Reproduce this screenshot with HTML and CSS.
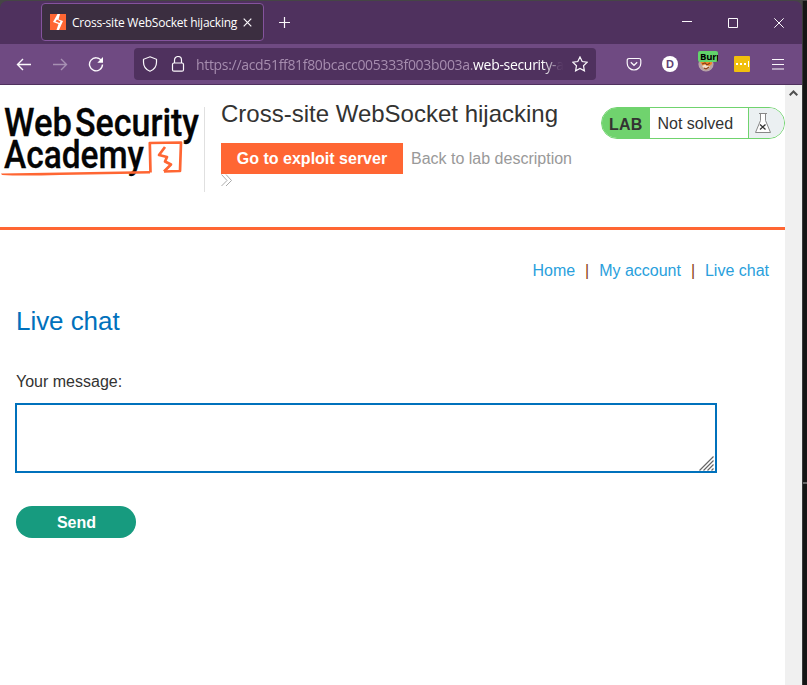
FILE: index.html
```html
<!DOCTYPE html>
<html lang="en">
<head>
<meta charset="utf-8">
<title>Cross-site WebSocket hijacking</title>
<link rel="stylesheet" href="styles.css">
</head>
<body>
<div class="desktop">
<div class="window">
  <header class="titlebar">
    <div class="tab">
      <svg class="favicon" width="16" height="16" viewBox="0 0 16 16"><path fill="#ff6633" d="M0 0h16v16H0z"/><path fill="#fff" d="M7.500 0H10L8.500 5.500 13 7 9 16H6.500L8.500 10 3 8z"/><path fill="#ff6633" d="M7 5.500L5.500 7.500 9.500 9 10.500 7.500z"/></svg>
      <span class="tab-title">Cross-site WebSocket hijacking</span>
      <svg class="tab-close" width="9" height="9" viewBox="0 0 9 9"><path d="M.7.7l7.6 7.6M8.3.7L.7 8.3"/></svg>
    </div>
    <svg class="new-tab" width="12" height="12" viewBox="0 0 12 12"><path d="M5.500 0v11M0 5.500h11"/></svg>
    <div class="controls">
      <svg width="10" height="12" viewBox="0 0 10 12"><path d="M0 4.500h10"/></svg>
      <svg width="10" height="12" viewBox="0 0 10 12"><path d="M.5 1.500h9v9h-9z"/></svg>
      <svg width="10" height="12" viewBox="0 0 10 12"><path d="M.3 1.300l9.400 9.400M9.700 1.300L.3 10.700"/></svg>
    </div>
  </header>
  <nav class="toolbar">
    <div class="history">
      <svg width="16" height="16" viewBox="0 0 16 16"><path d="M15 8.500H1.500M7 3L1.500 8.500 7 14"/></svg>
      <svg class="dim" width="16" height="16" viewBox="0 0 16 16"><path d="M1 8.500h13.500M9 3l5.500 5.500L9 14"/></svg>
      <svg width="16" height="16" viewBox="0 0 16 16"><path d="M13.600 5A6.500 6.500 0 1 0 14.500 8.500"/><path fill="#fff" stroke="none" d="M15 1v5.700H9.300z"/></svg>
    </div>
    <div class="address">
      <svg width="16" height="16" viewBox="0 0 16 16"><path d="M8 .8l6.500 2.500v3c0 4-2.500 7.500-6.500 9-4-1.500-6.500-5-6.500-9v-3z"/></svg>
      <svg width="14" height="16" viewBox="0 0 14 16"><rect x="1.500" y="7" width="11" height="8.200" rx="1.500"/><path d="M3.500 7V4a3.500 3.500 0 0 1 7 0v3"/></svg>
      <div class="url">https://acd51ff81f80bcacc005333f003b003a.<b>web-security-</b>academy.net</div>
      <svg class="star" width="16" height="16" viewBox="0 0 16 16"><path d="M8 .9l2.200 4.600 5 .7-3.700 3.500.9 5.100L8 12.400l-4.400 2.400.9-5.100L.8 6.200l5-.7z"/></svg>
    </div>
    <div class="extensions">
      <svg width="16" height="16" viewBox="0 0 16 16"><path d="M3 2.500h10a1.800 1.800 0 0 1 1.800 1.800v2.900a6.800 6.800 0 0 1-13.600 0V4.300A1.800 1.800 0 0 1 3 2.500z"/><path d="M4.800 6.200L8 9.300l3.200-3.100"/></svg>
      <span class="disc">D</span>
      <div class="proxy">
        <svg width="16" height="16" viewBox="0 0 16 16"><circle cx="8" cy="8" r="7" fill="#bca49c" stroke="#b9a5ab"/><path fill="#f18a2b" stroke="none" d="M1 4l5-2 8 1v5l-4 3-5-1z"/><path fill="#f4e1c8" stroke="none" d="M4 10l4-2 4 3-4 3z"/><path stroke="#8a3f18" d="M4 8l3-1 2 2 3-2M6 12l2 1 3-2"/></svg>
        <span class="badge">Burp</span>
      </div>
      <svg width="16" height="16" viewBox="0 0 16 16"><rect width="16" height="16" rx="1" fill="#f1bf0d" stroke="none"/><path fill="#fff" stroke="none" d="M2 7h2v2H2zM6 7h2v2H6zM10 7h2v2h-2zM14 5h1v6h-1z"/></svg>
      <svg width="12" height="16" viewBox="0 0 12 16"><path d="M0 3.500h12M0 8.500h12M0 13h12"/></svg>
    </div>
  </nav>
  <div class="viewport">
    <main class="page">
      <header class="lab-header">
        <svg class="logo" width="205" height="96" viewBox="0 0 205 96">
          <g class="logo-text"><text x="4" y="51" textLength="68" lengthAdjust="spacingAndGlyphs">Web</text><text x="75" y="51" textLength="124" lengthAdjust="spacingAndGlyphs">Security</text><text x="4" y="83" textLength="140" lengthAdjust="spacingAndGlyphs">Academy</text></g>
          <path fill="#ff6633" d="M1 88.500l149-2.500v2.500L60 90q-40 1-58 0z"/>
          <path class="logo-box" d="M150.500 87.500l-.7-29.500 31.200-.5-1 28.500-16 .5"/><path class="logo-box" d="M165 62l-6 8 8 2-2 4.500 6 3-7 7"/>
        </svg>
        <div class="lab-info">
          <h1>Cross-site WebSocket hijacking</h1>
          <div class="links"><a class="exploit">Go to exploit server</a><a class="back">Back to lab description</a></div>
          <svg class="chevrons" width="12" height="13" viewBox="0 0 12 13"><path d="M.5.5L6 6.500.5 12M5 .5l5.500 6L5 12"/></svg>
        </div>
        <div class="status"><strong>LAB</strong><span>Not solved</span>
          <div class="flask"><svg width="18" height="22" viewBox="0 0 18 22"><path d="M6.500 1.500v7L1.500 20.500h15l-5-12v-7"/><path d="M5 1.500h8"/><path class="cross" d="M6 12.500l5.500 5M11.500 12.500l-5.500 5"/></svg></div>
        </div>
      </header>
      <div class="site-nav"><a>Home</a><i>|</i><a>My account</a><i>|</i><a>Live chat</a></div>
      <h2>Live chat</h2>
      <form>
        <label for="message">Your message:</label>
        <div class="field"><textarea id="message"></textarea><svg class="grip" width="15" height="15" viewBox="0 0 15 15"><path d="M.5 14.500l14-14M4.500 14.500l10-10M8.500 14.500l6-6M12.500 14.500l2-2"/></svg></div>
        <button type="button">Send</button>
      </form>
    </main>
    <div class="scrollbar"><svg width="9" height="6" viewBox="0 0 9 6"><path d="M.7 5.300L4.500 1.500l3.800 3.800"/></svg></div>
  </div>
</div>
<aside class="backdrop"><span></span></aside>
</div>
</body>
</html>
```
FILE: styles.css
```css
* { box-sizing: border-box; }
body { margin: 0; overflow: hidden; font: 16px "Liberation Sans", Arial, sans-serif; color: #333332; }
svg { display: block; flex: none; }
.desktop { display: flex; height: 685px; padding-top: 1px; background: #454545; }
.window { width: 802px; display: flex; flex-direction: column; }
.backdrop { width: 5px; background: #151515; border-left: 1px solid #393939; padding-top: 29px; }
.backdrop span { display: block; height: 454px; border-bottom: 2px solid #666; }
.titlebar { height: 43px; display: flex; align-items: center; padding-left: 41px; background: #4f315e; border-radius: 7px 7px 0 0; }
.titlebar svg, .toolbar svg { fill: none; stroke: #fbf8fc; stroke-width: 1.2; }
.titlebar .favicon { stroke: none; }
.tab { width: 223px; height: 38px; display: flex; align-items: center; margin-top: -1px; padding: 0 11px 0 8px; border: 1px solid #84539d; border-radius: 4px; background: #3b2e40; }
.tab-title { flex: none; width: 171px; margin-left: 6px; color: #fff; font: 12px "Open Sans", "Noto Sans", sans-serif; letter-spacing: -.23px; white-space: nowrap; }
.new-tab { margin-left: 15px; margin-top: 1px; }
.controls { display: flex; gap: 36px; margin-left: auto; margin-right: 18px; }
.controls svg { stroke-width: 1; }
.toolbar { height: 41px; display: flex; align-items: center; background: #6f4a82; border-bottom: 1px solid #4f315e; }
.history { display: flex; gap: 20px; margin-left: 16px; }
.toolbar .history svg { stroke-width: 1.4; }
.dim { opacity: .4; }
.address { display: flex; align-items: center; width: 462px; height: 32px; margin-left: 30px; padding: 0 8px; border-radius: 4px; background: #4f315e; }
.address svg + svg { margin-left: 13px; }
.url { width: 368px; margin-left: 11px; padding-top: 1px; overflow: hidden; white-space: nowrap; color: #a68daf; font: 14px "Open Sans", "Noto Sans", sans-serif; letter-spacing: -.32px; -webkit-mask-image: linear-gradient(90deg, #000 94%, transparent 100%); mask-image: linear-gradient(90deg, #000 94%, transparent 100%); }
.url b { font-weight: 400; color: #fff; }
.star { margin-left: 8px; }
.extensions { display: flex; align-items: center; gap: 20px; margin-left: 30px; }
.extensions > svg:last-child { margin-left: 2px; }
.disc { width: 16px; height: 16px; border-radius: 50%; background: #fff; color: #5f4174; font: bold 11px/16px "Liberation Sans", sans-serif; text-align: center; }
.proxy { position: relative; }
.badge { position: absolute; left: 0; top: -5px; width: 20px; height: 11px; overflow: hidden; border-radius: 2px; background: #62d46b; color: #000; font: bold 9.5px/12px "Open Sans", sans-serif; letter-spacing: -.2px; padding-left: 2px; }
.viewport { display: flex; flex: 1; background: #fff; }
.page { width: 785px; }
.scrollbar { width: 17px; padding: 5px 4px; background: #f0f0f0; }
.scrollbar path { fill: none; stroke: #505050; stroke-width: 2; }
.lab-header { display: flex; height: 145px; border-bottom: 3px solid #ff6633; }
.logo-text { font-family: Roboto, sans-serif; font-size: 38px; font-weight: 500; fill: #050505; stroke: #050505; stroke-width: .3; }
.logo-box { fill: none; stroke: #ff6633; stroke-width: 2.7; stroke-linejoin: round; }
.lab-info { width: 379px; height: 85px; margin-top: 22px; margin-left: -1px; padding-left: 16px; border-left: 1px solid #e0e0e0; }
h1 { margin: -9px 0 0; font-size: 24px; font-weight: 400; line-height: 32px; white-space: nowrap; }
.links { display: flex; height: 31px; margin-top: 13px; line-height: 31px; white-space: nowrap; }
.exploit { width: 182px; background: #ff6633; color: #fff; font-weight: 700; text-align: center; }
.back { margin-left: 8px; color: #999; }
.chevrons path { fill: none; stroke: #aaa; }
.status { display: flex; width: 184px; height: 32px; margin: 22px 0 0 18px; border: 1px solid #70d36e; border-radius: 16px; overflow: hidden; line-height: 31px; }
.status strong { width: 48px; padding-left: 7px; background: #70d36e; line-height: 33px; letter-spacing: .2px; }
.status span { width: 98px; padding-left: 7.5px; }
.flask { flex: 1; padding: 4px 0 0 5px; background: #ebf0f2; border-left: 1px solid #70d36e; }
.flask path { fill: none; stroke: #888; }
.flask path:first-child { fill: #fff; }
.flask .cross { stroke: #333; stroke-width: 1.3; }
.site-nav { display: flex; justify-content: flex-end; padding: 31px 16px 0 0; line-height: 20px; color: #29a0dc; }
.site-nav i { width: 24px; text-align: center; font-style: normal; color: #8b4513; }
h2 { margin: 24px 0 0 16px; color: #0071bc; font-size: 26px; font-weight: 400; line-height: 32px; letter-spacing: -.05px; }
form { margin: 35px 0 0 15px; }
label { display: block; margin-left: 1px; line-height: 20px; }
.field { position: relative; width: 702px; height: 70px; margin-top: 11px; }
textarea { display: block; width: 100%; height: 100%; border: 2px solid #0071bc; resize: none; outline: none; }
.grip { position: absolute; right: 3px; bottom: 2px; fill: none; stroke: #666; stroke-width: 1.2; }
button { display: block; width: 120px; height: 32px; margin: 33px 0 0 1px; padding: 1px 0 0 1px; border: 0; border-radius: 16px; background: #179b7f; color: #fff; font: bold 16px "Liberation Sans", Arial, sans-serif; }
```
